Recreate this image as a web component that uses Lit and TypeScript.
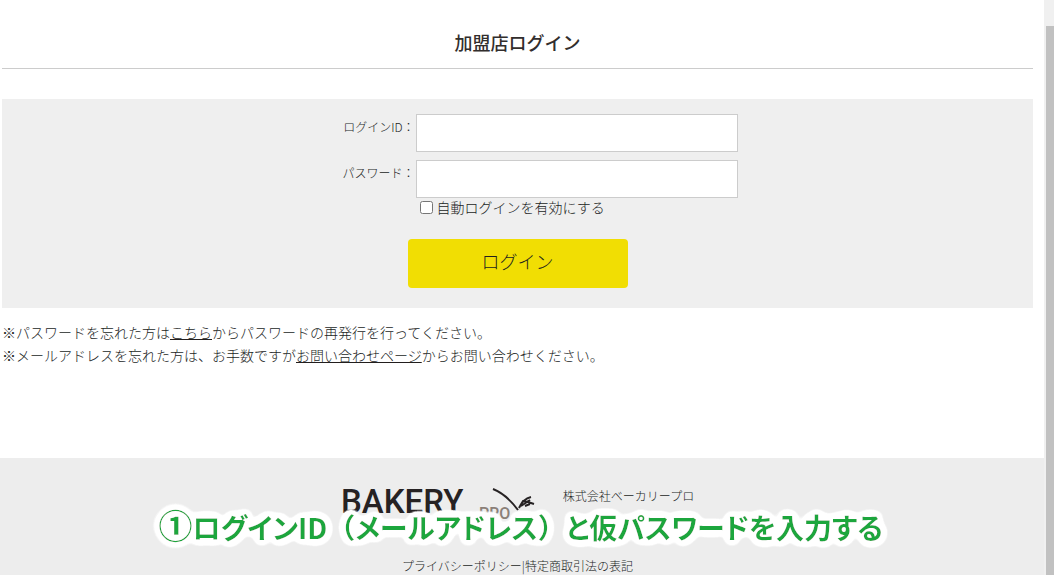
import { LitElement, html, css } from "lit";
import { customElement } from "lit/decorators.js";

@customElement("app-root")
export class AppRoot extends LitElement {
  static styles = css`
    :host {
      display: flex;
      position: relative;
      min-height: 100vh;
      background: #fff;
      color: #221e1d;
      font: 300 14px/23px "Noto Sans CJK JP", sans-serif;
    }
    * { box-sizing: border-box; }
    a { color: inherit; }
    .page { flex: 1; display: flex; flex-direction: column; }
    main { flex: 1; padding: 0 11px 0 2px; }
    h1 {
      margin: 0 0 30px;
      padding: 27px 0 11px;
      border-bottom: 1px solid #ccc;
      color: #322e2d;
      font-size: 18px;
      line-height: 30px;
      font-weight: 500;
      text-align: center;
    }
    form {
      display: flex;
      flex-direction: column;
      align-items: center;
      padding: 15px 0 20px;
      background: #efefef;
    }
    .fields {
      display: grid;
      grid-template-columns: 1fr 322px 1fr;
      row-gap: 8px;
      width: 100%;
      padding-left: 118px;
    }
    .fields label {
      grid-column: 1;
      padding-right: 1px;
      font-size: 12px;
      line-height: 26px;
      text-align: right;
    }
    .text {
      grid-column: 2;
      height: 38px;
      border: 1px solid #ccc;
      background: #fff;
      padding: 8px;
      font: inherit;
    }
    .fields .auto {
      grid-column: 2;
      display: flex;
      align-items: center;
      gap: 4px;
      margin-top: -8px;
      padding: 0 0 0 4px;
      font-size: 14px;
      line-height: 19px;
    }
    .auto input { margin: 0; width: 13px; height: 13px; }
    button {
      width: 220px;
      height: 49px;
      margin-top: 22px;
      border: 0;
      border-radius: 4px;
      background: #f1de03;
      color: #221f1e;
      font: inherit;
      font-size: 18px;
      padding: 0 0 5px;
    }
    .notes { margin: 13px 0 0; }
    footer {
      padding: 28px 11px 0 2px;
      background: #ededed;
      font-size: 12px;
      line-height: 19px;
      text-align: center;
    }
    .company { display: flex; justify-content: center; gap: 28px; height: 70px; text-align: left; }
    .logo { display: block; width: 194px; height: 60px; }
    .brand { font: 500 33px Roboto, sans-serif; fill: #262223; }
    .sub { font: 500 16px Roboto, sans-serif; fill: #8b8078; }
    .twig { fill: none; stroke: #262223; stroke-width: 2; }
    address { font-style: normal; }
    .links a { text-decoration: none; }
    .track { width: 10px; padding: 26px 0 0 2px; background: #f0f0f0; }
    .thumb { height: 100%; background: #c1c1c1; }
    .caption {
      position: absolute;
      left: 0;
      bottom: 20px;
      width: 100%;
      height: 56px;
      overflow: visible;
      pointer-events: none;
    }
    .caption text {
      font-size: 28px;
      font-weight: 700;
      font-feature-settings: "palt";
      text-anchor: middle;
      fill: #1aa63c;
    }
    .wide { font-feature-settings: normal; }
    .num { font-size: 34px; }
  `;

  render() {
    return html`
      <div class="page">
        <main>
          <h1>加盟店ログイン</h1>
          <form>
            <div class="fields">
              <label for="login">ログインID：</label>
              <input class="text" id="login" type="text" />
              <label for="password">パスワード：</label>
              <input class="text" id="password" type="password" />
              <label class="auto"><input type="checkbox" />自動ログインを有効にする</label>
            </div>
            <button type="button">ログイン</button>
          </form>
          <p class="notes">
            ※パスワードを忘れた方は<a href="#reset">こちら</a>からパスワードの再発行を行ってください。<br />
            ※メールアドレスを忘れた方は、お手数ですが<a href="#contact">お問い合わせページ</a>からお問い合わせください。
          </p>
        </main>
        <footer>
          <div class="company">
            <svg class="logo" viewBox="0 0 194 60" role="img" aria-label="BAKERY PRO">
              <text class="brand" x="0" y="27">BAKERY</text>
              <text class="sub" x="138" y="33">PRO</text>
              <path class="twig" d="M152 3 Q165 8 177 24" />
              <path class="twig" d="M178 22 Q182 13 190 11 M179 20 L182 15 L187 16 L193 18 M180 20 L189 14 M184 20 L189 18" />
            </svg>
            <address>株式会社ベーカリープロ</address>
          </div>
          <div class="links"><a href="#privacy">プライバシーポリシー</a>|<a href="#law">特定商取引法の表記</a></div>
        </footer>
      </div>
      <div class="track"><div class="thumb"></div></div>
      <svg class="caption" role="note">
        <!-- rounded white halo behind the caption -->
        <filter id="halo" x="-5%" y="-50%" width="110%" height="200%">
          <feGaussianBlur in="SourceAlpha" stdDeviation="4" result="soft" />
          <feComponentTransfer in="soft" result="shape">
            <feFuncA type="linear" slope="36" intercept="-0.8" />
          </feComponentTransfer>
          <feFlood flood-color="#fff" />
          <feComposite in2="shape" operator="in" result="white" />
          <feMerge>
            <feMergeNode in="white" />
            <feMergeNode in="SourceGraphic" />
          </feMerge>
        </filter>
        <text x="49.4%" y="40" filter="url(#halo)"><tspan class="num">①</tspan>ログインID<tspan class="wide">（</tspan>メールアドレス<tspan class="wide">）</tspan>と仮パスワードを入力する</text>
      </svg>
    `;
  }
}
